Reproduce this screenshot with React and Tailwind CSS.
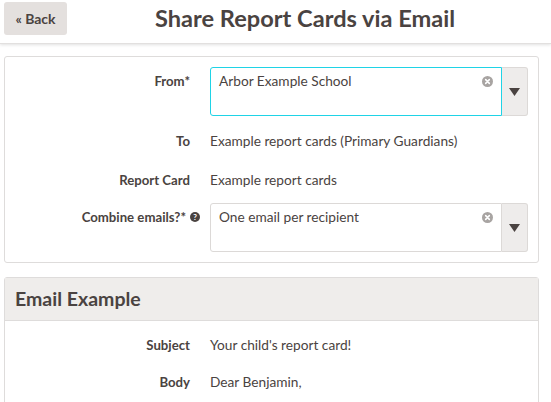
import React from "react";

const ClearIcon = () => (
  <svg width="11" height="11" viewBox="0 0 12 12" className="shrink-0">
    <circle cx="6" cy="6" r="6" fill="#a8a4a2" />
    <path d="M4 4l4 4M8 4l-4 4" stroke="#fff" strokeWidth="1.7" strokeLinecap="round" />
  </svg>
);

const SelectBox = ({ value, focused }) => (
  <div className="flex h-[49px] w-[318px]">
    <div
      className={
        focused
          ? "flex flex-1 items-start justify-between rounded-l-[3px] border border-[#1fd3e6] pl-[8px] pr-[8px] pt-[3px]"
          : "flex flex-1 items-start justify-between rounded-l-[3px] border border-[#dcd9d7] pl-[8px] pr-[8px] pt-[3px]"
      }
    >
      <span className="text-[13.7px] leading-[20px]">{value}</span>
      <span className="mt-[5px] flex">
        <ClearIcon />
      </span>
    </div>
    <div className="flex w-[26px] items-center justify-center rounded-r-[3px] border border-l-0 border-[#dcd9d7] bg-[#eeeceb]">
      <svg width="11" height="8" viewBox="0 0 11 8">
        <path d="M0 0h11L5.5 8z" fill="#4a4341" />
      </svg>
    </div>
  </div>
);

const Row = ({ label, children, className, labelPad }) => (
  <div className={"flex items-start text-[13.7px] leading-[20px] " + (className || "")}>
    <div className={"w-[185px] shrink-0 text-right text-[13.2px] font-bold " + (labelPad ? "pt-[4px]" : "")}>{label}</div>
    <div className="ml-[20px]">{children}</div>
  </div>
);

export default function App() {
  return (
    <div
      className="h-[402px] w-[551px] overflow-hidden bg-white text-[#4a4341]"
      style={{ fontFamily: "Lato, 'Open Sans', sans-serif" }}
    >
      {/* header */}
      <header className="flex h-[44px] items-start border-b border-[#e2e0df] shadow-[0_1px_3px_rgba(0,0,0,0.12)]">
        <button className="ml-[4px] mt-[2px] h-[33px] w-[63px] rounded-[3px] bg-[#e4e0de] text-[14px] font-bold text-[#4a4341]">
          « Back
        </button>
        <h1 className="ml-[88px] mt-[3px] text-[23.6px] font-bold leading-[30px]">Share Report Cards via Email</h1>
      </header>

      {/* form panel */}
      <section className="ml-[4px] mt-[12px] w-[535px] rounded-[3px] border border-[#dedcdb] pb-[10px] pt-[10px]">
        <Row label="From*" labelPad>
          <SelectBox value="Arbor Example School" focused />
        </Row>
        <Row label="To" className="mt-[15px]">
          Example report cards (Primary Guardians)
        </Row>
        <Row label="Report Card" className="mt-[19px]">
          Example report cards
        </Row>
        <div className="mt-[13px] flex items-start text-[13.7px] leading-[20px]">
          <div className="flex w-[185px] shrink-0 items-center justify-end pt-[4px] text-[13.2px] font-bold">
            <span>Combine emails?*</span>
            <svg width="10" height="10" viewBox="0 0 10 10" className="ml-[4px] mr-[-10px] shrink-0">
              <circle cx="5" cy="5" r="5" fill="#4a4341" />
              <text x="5" y="8.2" textAnchor="middle" fontSize="8" fontWeight="bold" fill="#fff" fontFamily="Lato, sans-serif">?</text>
            </svg>
          </div>
          <div className="ml-[20px]">
            <SelectBox value="One email per recipient" />
          </div>
        </div>
      </section>

      {/* email example panel */}
      <section className="ml-[4px] mt-[14px] w-[535px] rounded-t-[3px] border border-[#dedcdb]">
        <div className="flex h-[43px] items-center border-b border-[#dedcdb] bg-[#efedeb] px-[10px]">
          <h2 className="text-[19.5px] font-bold">Email Example</h2>
        </div>
        <Row label="Subject" className="mt-[14px]">
          Your child's report card!
        </Row>
        <Row label="Body" className="mt-[17px] pb-[40px]">
          Dear Benjamin,
        </Row>
      </section>
    </div>
  );
}
